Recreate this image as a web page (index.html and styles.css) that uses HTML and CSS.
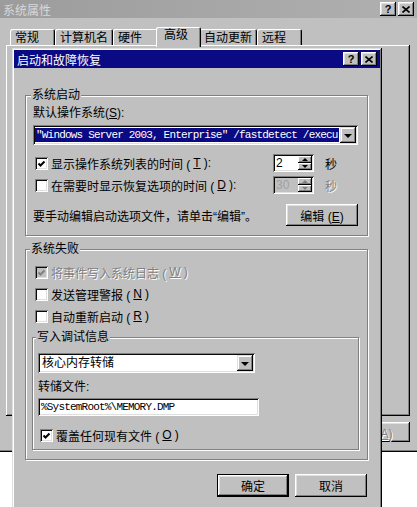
FILE: index.html
```html
<!DOCTYPE html>
<html lang="zh-CN">
<head>
  <meta charset="UTF-8">
  <title>启动和故障恢复</title>
  <link rel="stylesheet" href="styles.css">
</head>
<body>
  <div class="window back">
    <div class="titlebar inactive">
      <span class="title">系统属性</span>
      <span class="caption-btns">
        <span class="cbtn">?</span>
        <span class="cbtn"><svg width="8" height="7" viewBox="0 0 8 7"><path d="M0.5 0.5 L7.5 6.5 M7.5 0.5 L0.5 6.5" stroke="#000" stroke-width="1.6"/></svg></span>
      </span>
    </div>
    <div class="tabs">
      <span class="tab">常规</span>
      <span class="tab">计算机名</span>
      <span class="tab">硬件</span>
      <span class="tab active">高级</span>
      <span class="tab">自动更新</span>
      <span class="tab">远程</span>
    </div>
    <div class="tab-panel"></div>
    <div class="back-buttons">
      <button class="btn">确定</button>
      <button class="btn">取消</button>
      <button class="btn" disabled>应用(<u>A</u>)</button>
    </div>
  </div>

  <div class="window dialog">
    <div class="titlebar active">
      <span class="title">启动和故障恢复</span>
      <span class="caption-btns">
        <span class="cbtn">?</span>
        <span class="cbtn"><svg width="8" height="7" viewBox="0 0 8 7"><path d="M0.5 0.5 L7.5 6.5 M7.5 0.5 L0.5 6.5" stroke="#000" stroke-width="1.6"/></svg></span>
      </span>
    </div>

    <div class="dialog-body">
      <fieldset class="group startup">
        <legend>系统启动</legend>
        <div class="field-label">默认操作系统(<u>S</u>):</div>
        <div class="combo">
          <span class="combo-value selected mono">"Windows Server 2003, Enterprise" /fastdetect /execu</span>
          <span class="combo-btn"></span>
        </div>

        <div class="timer-row first">
          <label class="check">
            <span class="box"><svg width="13" height="13" viewBox="0 0 13 13"><path d="M3.5 6.5 L5.5 8.5 L9.5 4.5" fill="none" stroke="#000" stroke-width="2"/></svg></span>
            显示操作系统列表的时间 (<u>T</u>):
          </label>
          <span class="spin">
            <span class="spin-value">2</span>
            <span class="spin-btns"><span class="spin-up"></span><span class="spin-down"></span></span>
          </span>
          <span class="unit">秒</span>
        </div>

        <div class="timer-row">
          <label class="check">
            <span class="box"></span>
            在需要时显示恢复选项的时间 (<u>D</u>):
          </label>
          <span class="spin disabled">
            <span class="spin-value">30</span>
            <span class="spin-btns"><span class="spin-up"></span><span class="spin-down"></span></span>
          </span>
          <span class="unit disabled">秒</span>
        </div>

        <div class="edit-row">
          <span>要手动编辑启动选项文件，请单击“编辑”。</span>
          <button class="btn edit">编辑 (<u>E</u>)</button>
        </div>
      </fieldset>

      <fieldset class="group failure">
        <legend>系统失败</legend>
        <label class="check disabled">
          <span class="box"><svg width="13" height="13" viewBox="0 0 13 13"><path d="M3.5 6.5 L5.5 8.5 L9.5 4.5" fill="none" stroke="#808080" stroke-width="2"/></svg></span>
          将事件写入系统日志 (<u>W</u>)
        </label>
        <label class="check">
          <span class="box"></span>
          发送管理警报 (<u>N</u>)
        </label>
        <label class="check">
          <span class="box"></span>
          自动重新启动 (<u>R</u>)
        </label>

        <fieldset class="group debug">
          <legend>写入调试信息</legend>
          <div class="combo dump-type">
            <span class="combo-value">核心内存转储</span>
            <span class="combo-btn"></span>
          </div>
          <div class="field-label dump-label">转储文件:</div>
          <div class="textbox mono">%SystemRoot%\MEMORY.DMP</div>
          <label class="check overwrite">
            <span class="box"><svg width="13" height="13" viewBox="0 0 13 13"><path d="M3.5 6.5 L5.5 8.5 L9.5 4.5" fill="none" stroke="#000" stroke-width="2"/></svg></span>
            覆盖任何现有文件 (<u>O</u>)
          </label>
        </fieldset>
      </fieldset>

      <div class="dialog-buttons">
        <button class="btn default">确定</button>
        <button class="btn">取消</button>
      </div>
    </div>
  </div>
</body>
</html>
```

FILE: styles.css
```css
body {
  margin: 0;
  width: 417px;
  height: 507px;
  overflow: hidden;
  position: relative;
  background: #fff;
  font-family: "Liberation Sans", "Noto Sans CJK SC", sans-serif;
  font-size: 12px;
  color: #000;
}

u {
  text-decoration: underline;
  text-underline-offset: 1px;
}

.mono {
  font-family: "Liberation Mono", monospace;
  font-size: 11px;
  letter-spacing: -0.8px;
}

/* windows */

.window {
  position: absolute;
  box-sizing: border-box;
  padding: 2px;
  display: flex;
  flex-direction: column;
  background: #c0c0c0;
  box-shadow: inset -1px -1px #000, inset 1px 1px #dfdfdf, inset -2px -2px #808080, inset 2px 2px #fff;
}

.back {
  left: -2px;
  top: -2px;
  width: 421px;
  height: 454px;
}

.dialog {
  left: 12px;
  top: 48px;
  width: 370px;
  height: 472px;
}

.titlebar {
  flex: none;
  height: 18px;
  display: flex;
  align-items: center;
  justify-content: space-between;
  padding: 0 3px 0 3px;
}

.titlebar.inactive {
  background: linear-gradient(to right, #9c9c9c, #b0b0b0);
  color: #d8d8d8;
}

.titlebar.active {
  background: #0a0a84;
  color: #fff;
}

.caption-btns {
  display: flex;
  gap: 2px;
}

.cbtn {
  width: 16px;
  height: 14px;
  box-sizing: border-box;
  display: flex;
  align-items: center;
  justify-content: center;
  background: #c0c0c0;
  color: #000;
  font: bold 11px "Liberation Sans", sans-serif;
  box-shadow: inset -1px -1px #000, inset 1px 1px #fff, inset -2px -2px #808080, inset 2px 2px #dfdfdf;
}

/* back window: tabs */

.tabs {
  flex: none;
  display: flex;
  align-items: flex-end;
  height: 18px;
  margin-top: 9px;
  padding-left: 10px;
}

.tab {
  position: relative;
  z-index: 1;
  min-width: 45px;
  height: 16px;
  box-sizing: border-box;
  padding: 0 5px;
  line-height: 18px;
  background: #c0c0c0;
  border-radius: 2px 2px 0 0;
  box-shadow: inset 1px 1px #fff, inset -1px 0 #000, inset -2px 0 #808080;
}

.tab.active {
  z-index: 2;
  height: 20px;
  margin: 0 -2px -2px;
  padding: 0 7px 0 8px;
  line-height: 16px;
}

.tab-panel {
  flex: none;
  height: 371px;
  margin: 0 7px 0 6px;
  box-sizing: border-box;
  box-shadow: inset -1px -1px #000, inset 1px 1px #fff, inset -2px -2px #808080;
}

.back-buttons {
  display: flex;
  justify-content: flex-end;
  gap: 6px;
  margin-top: 6px;
  padding-right: 7px;
}

.back-buttons .btn {
  width: 75px;
  height: 20px;
}

/* buttons */

.btn {
  box-sizing: border-box;
  width: 72px;
  height: 23px;
  padding: 0;
  border: 0;
  background: #c0c0c0;
  color: #000;
  font: 12px "Liberation Sans", "Noto Sans CJK SC", sans-serif;
  box-shadow: inset -1px -1px #000, inset 1px 1px #fff, inset -2px -2px #808080, inset 2px 2px #dfdfdf;
}

.btn.default {
  box-shadow: inset 0 0 0 1px #000, inset -2px -2px #000, inset 2px 2px #fff, inset -3px -3px #808080, inset 3px 3px #dfdfdf;
}

.btn:disabled {
  color: #808080;
  text-shadow: 1px 1px #fff;
}

.btn.edit {
  height: 22px;
}

/* dialog body */

.dialog-body {
  padding: 20px 12px 0 11px;
}

.group {
  margin: 0;
  min-width: 0;
  border: 1px solid #808080;
  box-shadow: 1px 1px 0 #fff, inset 1px 1px 0 #fff;
}

.group legend {
  margin-left: -2px;
  padding: 0 1px;
  line-height: 14px;
  background: #c0c0c0;
}

.startup {
  padding: 4px 9px 9px 7px;
}

.failure {
  margin-top: 6px;
  padding: 8px 8px 9px 6px;
}

.debug {
  margin-top: 6px;
  padding: 9px 6px 6px 5px;
}

.field-label {
  line-height: 14px;
}

.combo {
  display: flex;
  height: 20px;
  margin-top: 5px;
  box-sizing: border-box;
  padding: 2px;
  background: #fff;
  box-shadow: inset 1px 1px #808080, inset -1px -1px #fff, inset 2px 2px #0a0a0a, inset -2px -2px #dfdfdf;
}

.combo-value {
  flex: 1;
  min-width: 0;
  overflow: hidden;
  white-space: nowrap;
  line-height: 16px;
  padding-left: 2px;
}

.combo-value.selected {
  margin: 1px 1px 1px 0;
  padding-left: 1px;
  line-height: 14px;
  background: #0a0a84;
  color: #fff;
}

.combo-btn {
  flex: none;
  width: 16px;
  display: flex;
  align-items: center;
  justify-content: center;
  background: #c0c0c0;
  box-shadow: inset -1px -1px #000, inset 1px 1px #dfdfdf, inset -2px -2px #808080, inset 2px 2px #fff;
}

.combo-btn::before {
  content: "";
  border-left: 4px solid transparent;
  border-right: 4px solid transparent;
  border-top: 4px solid #000;
  margin-top: 1px;
}

.dump-type {
  width: 217px;
  margin-top: 0;
}

.dump-label {
  margin-top: 7px;
}

.textbox {
  width: 221px;
  height: 18px;
  margin-top: 4px;
  box-sizing: border-box;
  padding: 2px 3px;
  line-height: 14px;
  white-space: nowrap;
  background: #fff;
  box-shadow: inset 1px 1px #808080, inset -1px -1px #fff, inset 2px 2px #0a0a0a, inset -2px -2px #dfdfdf;
}

/* checkboxes */

.check {
  display: flex;
  align-items: center;
  gap: 3px;
  height: 16px;
  padding-left: 2px;
  white-space: nowrap;
}

.failure > .check {
  padding-left: 3px;
}

.failure > .check + .check {
  margin-top: 6px;
}

.check.overwrite {
  margin-top: 11px;
}

.box {
  flex: none;
  width: 13px;
  height: 13px;
  box-sizing: border-box;
  background: #fff;
  box-shadow: inset 1px 1px #808080, inset -1px -1px #fff, inset 2px 2px #0a0a0a, inset -2px -2px #dfdfdf;
}

.box svg {
  display: block;
}

.check.disabled {
  color: #808080;
  text-shadow: 1px 1px #fff;
}

.check.disabled .box {
  background: #c0c0c0;
}

/* timer rows */

.timer-row {
  display: flex;
  align-items: center;
  height: 18px;
  margin-top: 4px;
}

.timer-row.first {
  margin-top: 9px;
}

.timer-row .check {
  width: 240px;
  box-sizing: border-box;
}

.spin {
  display: flex;
  width: 41px;
  height: 18px;
  box-sizing: border-box;
  padding: 2px;
  background: #fff;
  box-shadow: inset 1px 1px #808080, inset -1px -1px #fff, inset 2px 2px #0a0a0a, inset -2px -2px #dfdfdf;
}

.spin-value {
  flex: 1;
  padding-left: 1px;
  line-height: 14px;
}

.spin-btns {
  flex: none;
  width: 14px;
  display: flex;
  flex-direction: column;
}

.spin-btns span {
  flex: 1;
  display: flex;
  align-items: center;
  justify-content: center;
  background: #c0c0c0;
  box-shadow: inset -1px -1px #000, inset 1px 1px #fff, inset -2px -2px #808080;
}

.spin-up::before,
.spin-down::before {
  content: "";
  border-left: 3px solid transparent;
  border-right: 3px solid transparent;
}

.spin-up::before {
  border-bottom: 3px solid #000;
}

.spin-down::before {
  border-top: 3px solid #000;
}

.spin.disabled {
  background: #c0c0c0;
}

.spin.disabled .spin-value {
  color: #a0a0a0;
}

.spin.disabled .spin-up::before {
  border-bottom-color: #808080;
}

.spin.disabled .spin-down::before {
  border-top-color: #808080;
}

.unit {
  margin-left: 11px;
}

.unit.disabled {
  color: #808080;
  text-shadow: 1px 1px #fff;
}

.edit-row {
  display: flex;
  align-items: center;
  justify-content: space-between;
  margin-top: 10px;
}

.dialog-buttons {
  display: flex;
  justify-content: flex-end;
  gap: 6px;
  margin-top: 14px;
  padding-right: 1px;
}
```
